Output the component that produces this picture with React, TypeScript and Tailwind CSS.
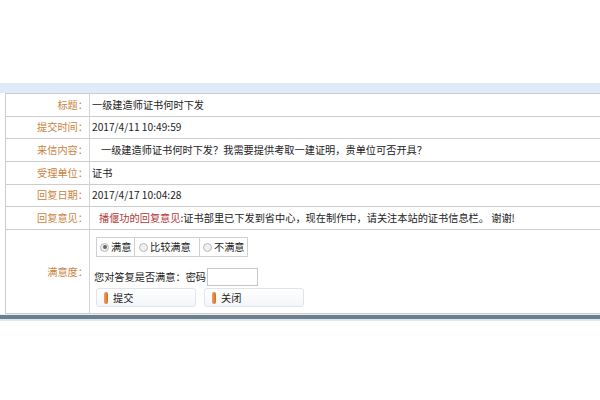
import React from 'react';

const FONT = { fontFamily: '"Noto Sans CJK SC", "Noto Sans", sans-serif' };

function Row({ label, children, tall }: { label: string; children: React.ReactNode; tall?: boolean }) {
  return (
    <div className={`flex border-b border-[#cdcdcd] ${tall ? 'h-[84px]' : 'h-[22.7px]'}`}>
      <div className="w-[84px] shrink-0 border-r border-[#d4d4d4] flex items-center justify-end pr-[1px] text-[#c8843f]">
        {label}
      </div>
      <div className="flex-1 flex items-center pl-[2px] text-[#222] whitespace-nowrap">{children}</div>
    </div>
  );
}

function Radio({ checked }: { checked?: boolean }) {
  return (
    <span className="inline-flex shrink-0 w-[9px] h-[9px] rounded-full border border-[#b8b8b8] bg-[#f0f0f0] items-center justify-center mr-[2px]">
      {checked && <span className="w-[4px] h-[4px] rounded-full bg-[#666]" />}
    </span>
  );
}

function Btn({ text }: { text: string }) {
  return (
    <div className="w-[100px] h-[19px] rounded-[3px] border border-[#dfe3ea] bg-gradient-to-b from-white to-[#f4f6f9] flex items-center pl-[7px]">
      <span className="w-[4px] h-[12px] rounded-[2px] bg-gradient-to-r from-[#f0a060] to-[#d86a20] mr-[5px]" />
      <span>{text}</span>
    </div>
  );
}

export default function App() {
  return (
    <div className="w-[600px] h-[400px] bg-white overflow-hidden text-[10.2px] leading-none" style={FONT}>
      <div className="h-[83px]" />
      <div className="h-[10px] bg-[#dfebfa]" />
      <div className="ml-[5px] border-l border-t border-[#cdcdcd]">
        <Row label="标题：">一级建造师证书何时下发</Row>
        <Row label="提交时间：">2017/4/11 10:49:59</Row>
        <Row label="来信内容：">
          <span className="pl-[9px]">一级建造师证书何时下发？我需要提供考取一建证明，贵单位可否开具？</span>
        </Row>
        <Row label="受理单位：">证书</Row>
        <Row label="回复日期：">2017/4/17 10:04:28</Row>
        <Row label="回复意见：">
          <span className="pl-[7px] text-[#b03838]">播偃功的回复意见</span>
          <span>:证书部里已下发到省中心，现在制作中，请关注本站的证书信息栏。 谢谢!</span>
        </Row>
        <Row label="满意度：" tall>
          <div className="flex flex-col pl-[4px] pt-[1px]">
            <div className="flex h-[20px] border border-[#cfcfcf] w-[152px] whitespace-nowrap">
              <div className="flex items-center pl-[3px] w-[38px] shrink-0 border-r border-[#cfcfcf]">
                <Radio checked />满意
              </div>
              <div className="flex items-center pl-[4px] w-[65px] shrink-0 border-r border-[#cfcfcf]">
                <Radio />比较满意
              </div>
              <div className="flex items-center pl-[3px] flex-1">
                <Radio />不满意
              </div>
            </div>
            <div className="flex items-center mt-[11px] -ml-[2px]">
              <span>您对答复是否满意：密码</span>
              <span className="w-[51px] h-[18px] border border-[#c8c8c8] bg-white ml-[1px]" />
            </div>
            <div className="flex gap-[8px] mt-[2px]">
              <Btn text="提交" />
              <Btn text="关闭" />
            </div>
          </div>
        </Row>
      </div>
      <div className="h-[1px] bg-[#e8eef2]" />
      <div className="h-[4px] bg-[#6b7f8e]" />
      <div className="h-[2px] bg-[#dde8ee]" />
    </div>
  );
}
